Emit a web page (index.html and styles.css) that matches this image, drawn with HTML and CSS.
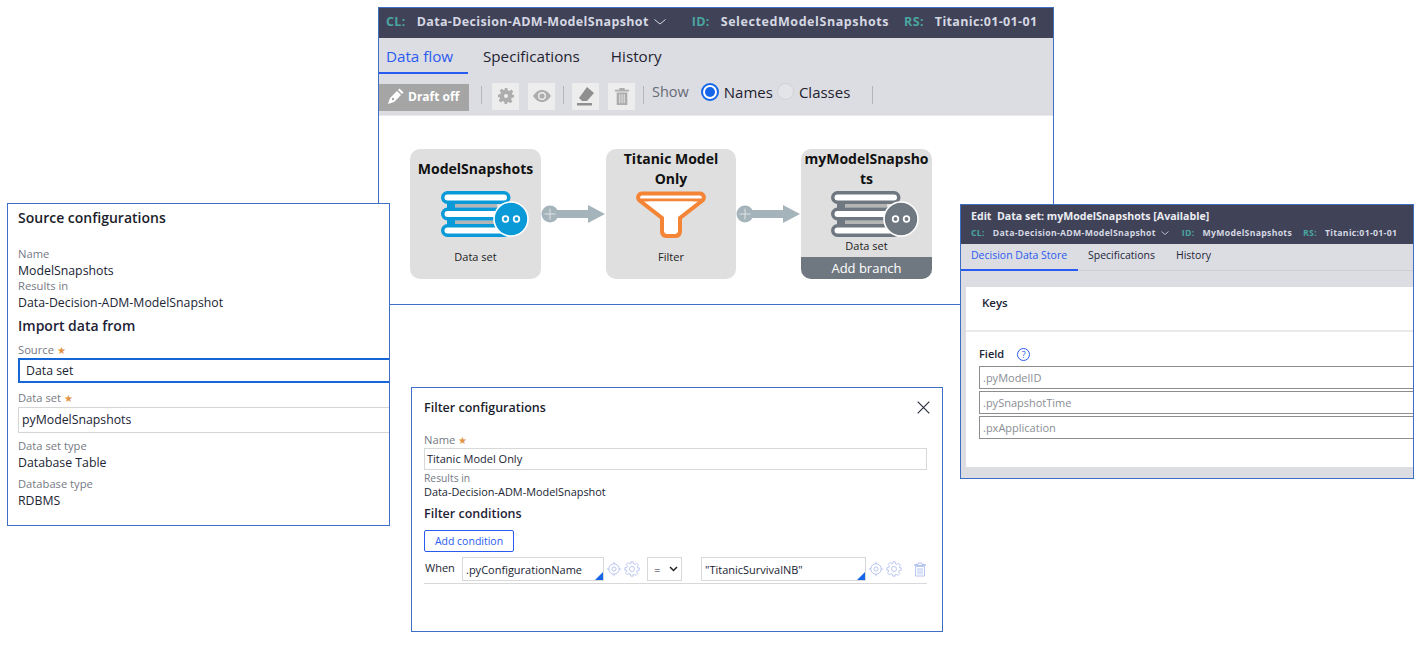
FILE: index.html
```html
<!DOCTYPE html>
<html lang="en">
<head>
<meta charset="utf-8">
<title>Data flow</title>
<link rel="stylesheet" href="styles.css">
</head>
<body>
<svg class="defs" width="0" height="0" aria-hidden="true">
  <defs>
    <symbol id="stack" viewBox="0 0 88 46">
      <rect x="6" y="12" width="8" height="5" fill="currentColor"/>
      <rect x="6" y="29" width="8" height="5" fill="currentColor"/>
      <rect x="14" y="12.500" width="42" height="4" fill="#b5b5b5"/>
      <rect x="14" y="29.500" width="42" height="4" fill="#b5b5b5"/>
      <rect x="1.750" y="1.750" width="66" height="9.500" rx="4.750" fill="#fff" stroke="currentColor" stroke-width="3.500"/>
      <rect x="1.750" y="18.250" width="66" height="9.500" rx="4.750" fill="#fff" stroke="currentColor" stroke-width="3.500"/>
      <rect x="1.750" y="34.750" width="66" height="9.500" rx="4.750" fill="#fff" stroke="currentColor" stroke-width="3.500"/>
      <circle cx="70" cy="28" r="17" fill="currentColor" stroke="#fff" stroke-width="1.600"/>
      <circle cx="64.500" cy="28" r="2.800" fill="none" stroke="#fff" stroke-width="1.800"/>
      <circle cx="75.500" cy="28" r="2.800" fill="none" stroke="#fff" stroke-width="1.800"/>
    </symbol>
    <symbol id="arrow" viewBox="0 0 64 18">
      <rect x="8" y="5" width="40" height="8" fill="#a5b3ba"/>
      <path d="M47 0 L64 9 L47 18Z" fill="#a5b3ba"/>
      <circle cx="9" cy="9" r="8.500" fill="#a5b3ba"/>
      <path d="M9 3.500V14.500M3.500 9H14.500" stroke="#dfe4e6" stroke-width="1"/>
    </symbol>
    <symbol id="gear" viewBox="-1 -1 19 19">
      <path d="M7 0h3l.4 2.400 1.700.7 2-1.400 2.100 2.100-1.400 2 .7 1.700L17 7v3l-2.400.4-.7 1.700 1.400 2-2.100 2.100-2-1.400-1.700.7L9.900 17H7l-.4-2.400-1.700-.7-2 1.400-2.100-2.100 1.400-2-.7-1.700L0 10V7l2.400-.4.700-1.700-1.400-2L3.800 .8l2 1.400 1.700-.7z" fill="none" stroke="currentColor" stroke-width="1"/>
      <circle cx="8.500" cy="8.500" r="3" fill="none" stroke="currentColor" stroke-width="1"/>
    </symbol>
    <symbol id="target" viewBox="0 0 20 20">
      <circle cx="10" cy="10" r="6.500" fill="none" stroke="currentColor" stroke-width="1.100"/>
      <circle cx="10" cy="10" r="2.600" fill="none" stroke="currentColor" stroke-width="1.100"/>
      <path d="M10 1V3.500M10 16.500V19M1 10H3.500M16.500 10H19" stroke="currentColor" stroke-width="1.100"/>
    </symbol>
  </defs>
</svg>

<main class="desk">
  <section class="win win-flow">
    <header class="idbar">
      <span class="idk">CL:</span><span class="idv">Data-Decision-ADM-ModelSnapshot</span>
      <svg class="chev" width="12" height="6" viewBox="0 0 12 6"><path d="M.5 .5L6 5 11.500 .5" fill="none" stroke="#d5d8e2"/></svg>
      <span class="idk id-gap">ID:</span><span class="idv idv-w">SelectedModelSnapshots</span>
      <span class="idk rs-gap">RS:</span><span class="idv">Titanic:01-01-01</span>
    </header>
    <nav class="tabs">
      <span class="tab tab-on">Data flow</span>
      <span class="tab">Specifications</span>
      <span class="tab">History</span>
    </nav>
    <div class="toolbar">
      <span class="draft">
        <svg width="17" height="17" viewBox="0 0 17 17"><path d="M1 16l2-6 7-7 4 4-7 7zM11 2l1.500-1.500 4 4L15 6z" fill="#fff"/><circle cx="6" cy="11" r="1.200" fill="#a5a5a5"/></svg>
        Draft off
      </span>
      <i class="sep s1"></i>
      <span class="tbtn"><svg width="16" height="16" viewBox="0 0 17 17"><path d="M7 0h3l.4 2.400 1.700.7 2-1.400 2.100 2.100-1.400 2 .7 1.700L17 7v3l-2.400.4-.7 1.700 1.400 2-2.100 2.100-2-1.400-1.700.7L9.900 17H7l-.4-2.400-1.700-.7-2 1.400-2.100-2.100 1.400-2-.7-1.700L0 10V7l2.400-.4.700-1.700-1.400-2L3.800 .8l2 1.400 1.700-.7z" fill="#adadad"/><circle cx="8.500" cy="8.500" r="2.200" fill="#ededed"/></svg></span>
      <span class="tbtn"><svg width="18" height="12" viewBox="0 0 18 12"><path d="M0 6C3 1.500 6 0 9 0s6 1.500 9 6c-3 4.500-6 6-9 6S3 10.500 0 6z" fill="#adadad"/><circle cx="9" cy="6" r="4" fill="#ededed"/><circle cx="9" cy="6" r="2.600" fill="#adadad"/></svg></span>
      <i class="sep s2"></i>
      <span class="tbtn"><svg width="20" height="20" viewBox="0 0 20 20"><path d="M11 1l7 6-7 8-5 0-3-3z" fill="#8f8f8f"/><rect x="1" y="17" width="15" height="2.500" fill="#8f8f8f"/></svg></span>
      <span class="tbtn"><svg width="16" height="18" viewBox="0 0 18 20"><path d="M6 1h6v2h5v2H1V3h5zM3 6h12v14H3z" fill="#adadad"/><path d="M6.500 8v10M9 8v10M11.500 8v10" stroke="#ededed"/></svg></span>
      <i class="sep s3"></i>
      <span class="show">Show</span>
      <span class="radio radio-on"></span><span class="rlabel">Names</span>
      <span class="radio"></span><span class="rlabel">Classes</span>
      <i class="sep s4"></i>
    </div>
    <div class="canvas">
      <article class="node n1">
        <h3>ModelSnapshots</h3>
        <svg class="stack blue"><use href="#stack"/></svg>
        <p>Data set</p>
      </article>
      <svg class="arrow a1" viewBox="0 0 64 18"><use href="#arrow"/></svg>
      <article class="node n2">
        <h3>Titanic Model Only</h3>
        <svg class="funnel" width="72" height="47" viewBox="0 0 72 47"><path d="M7 2.500H65a4 4 0 0 1 3 6.500L45 27V41a5 5 0 0 1-5 4H32a5 5 0 0 1-5-4V27L4 9a4 4 0 0 1 3-6.500z" fill="#fff" stroke="#f58536" stroke-width="4"/><path d="M5 9H67" stroke="#f58536" stroke-width="3"/><path d="M13 10.500H59L42 24V40H30V24z" fill="#fff"/></svg>
        <p>Filter</p>
      </article>
      <svg class="arrow a2" viewBox="0 0 64 18"><use href="#arrow"/></svg>
      <article class="node n3">
        <h3>myModelSnapshots</h3>
        <svg class="stack grey"><use href="#stack"/></svg>
        <p class="p-tight">Data set</p>
        <footer class="branch">Add branch</footer>
      </article>
    </div>
  </section>

  <section class="win win-source">
    <h2 class="title">Source configurations</h2>
    <div class="lab lab-first">Name</div>
    <div class="val">ModelSnapshots</div>
    <div class="lab">Results in</div>
    <div class="val">Data-Decision-ADM-ModelSnapshot</div>
    <h3 class="sub">Import data from</h3>
    <div class="lab">Source <span class="star">★</span></div>
    <div class="input input-focus">Data set</div>
    <div class="lab lab-m">Data set <span class="star">★</span></div>
    <div class="input input-ds">pyModelSnapshots</div>
    <div class="lab lab-m2">Data set type</div>
    <div class="val">Database Table</div>
    <div class="lab lab-m3">Database type</div>
    <div class="val">RDBMS</div>
  </section>

  <section class="win win-filter">
    <div class="f-head">
      <h2 class="title">Filter configurations</h2>
      <svg class="f-x" width="13" height="13" viewBox="0 0 13 13"><path d="M.7 .7L12.300 12.300M12.300 .7L.7 12.300" stroke="#2c2f3f" stroke-width="1.200"/></svg>
    </div>
    <div class="lab f-lab">Name <span class="star">★</span></div>
    <div class="finput">Titanic Model Only</div>
    <div class="lab f-res">Results in</div>
    <div class="val val-f">Data-Decision-ADM-ModelSnapshot</div>
    <h3 class="sub sub-f">Filter conditions</h3>
    <button class="addc" type="button">Add condition</button>
    <div class="cond">
      <span class="when">When</span>
      <span class="cinput c1">.pyConfigurationName</span>
      <svg class="ic" width="16" height="16"><use href="#target"/></svg>
      <svg class="ic" width="16" height="16"><use href="#gear"/></svg>
      <span class="sel">=
        <svg width="9" height="6" viewBox="0 0 9 6"><path d="M1 1L4.500 4.500 8 1" fill="none" stroke="#222" stroke-width="1.500"/></svg>
      </span>
      <span class="cinput c2">"TitanicSurvivalNB"</span>
      <svg class="ic" width="16" height="16"><use href="#target"/></svg>
      <svg class="ic" width="16" height="16"><use href="#gear"/></svg>
      <svg class="ic trash" width="12" height="15" viewBox="0 0 12 15"><path d="M4 1h4v1.500h3.500v1H.5v-1H4zM1.500 4.500h9V14h-9zM4 6v6.500M6 6v6.500M8 6v6.500" fill="none" stroke="currentColor" stroke-width=".9"/></svg>
    </div>
  </section>

  <section class="win win-store">
    <header class="s-head">
      <div class="s-title">Edit&nbsp; Data set: myModelSnapshots [Available]</div>
      <div class="s-ids">
        <span class="idk">CL:</span><span class="idv">Data-Decision-ADM-ModelSnapshot</span>
        <svg class="chev" width="8" height="4" viewBox="0 0 8 4"><path d="M.5 .5L4 3.500 7.500 .5" fill="none" stroke="#d5d8e2" stroke-width=".8"/></svg>
        <span class="idk s-id">ID:</span><span class="idv">MyModelSnapshots</span>
        <span class="idk s-rs">RS:</span><span class="idv">Titanic:01-01-01</span>
      </div>
    </header>
    <nav class="s-tabs">
      <span class="s-tab s-tab-on">Decision Data Store</span>
      <span class="s-tab">Specifications</span>
      <span class="s-tab">History</span>
    </nav>
    <div class="s-body">
      <div class="s-card">
        <div class="keys">Keys</div>
        <div class="fields">
          <div class="field-h">Field <span class="help">?</span></div>
          <div class="finp">.pyModelID</div>
          <div class="finp">.pySnapshotTime</div>
          <div class="finp">.pxApplication</div>
        </div>
      </div>
    </div>
  </section>
</main>
</body>
</html>
```

FILE: styles.css
```css
* { box-sizing: border-box; }
html, body { margin: 0; padding: 0; height: 100%; overflow: hidden; background: #fff; }
body { font-family: "Open Sans", "Noto Sans", sans-serif; color: #202433; }
h2, h3, p { margin: 0; }
.defs { position: absolute; }
.desk { position: relative; width: 1423px; height: 646px; }

.win { position: absolute; background: #fff; border: 1px solid #3f6fc4; }
.win-flow { left: 378px; top: 7px; width: 676px; height: 298px; display: flex; flex-direction: column; }
.win-source { left: 7px; top: 203px; width: 383px; height: 323px; padding: 4px 0 0 10px; overflow: hidden; }
.win-filter { left: 411px; top: 387px; width: 532px; height: 245px; padding: 10px 15px 0 12px; }
.win-store { left: 960px; top: 204px; width: 454px; height: 275px; display: flex; flex-direction: column; overflow: hidden; }

.idbar { height: 30px; flex: none; background: #404258; display: flex; align-items: center; padding: 0 0 3px 7px; font-size: 12.500px; font-weight: 700; letter-spacing: .35px; }
.idk { color: #4aa6a0; }
.idv { color: #d5d8e2; margin-left: 11px; white-space: nowrap; }
.idv-w { letter-spacing: .58px; }
.chev { margin-left: 5px; }
.id-gap { margin-left: 26px; }
.rs-gap { margin-left: 15px; }

.tabs { height: 36px; flex: none; background: #dcdde2; display: flex; align-items: stretch; font-size: 15.200px; }
.tab { padding: 8px 15px 0 15px; color: #1f2230; line-height: 21px; white-space: nowrap; }
.tab:first-child { padding-left: 7px; padding-right: 0; color: #2a5bf0; border-bottom: 2px solid #2a5bf0; width: 89px; }
.tab:nth-child(3) { padding-left: 16px; }

.toolbar { height: 42px; flex: none; background: #dcdde2; border-bottom: 1px solid #e9e9ec; display: flex; align-items: center; }
.draft { width: 90px; height: 27px; margin-top: 6px; background: #a5a5a5; color: #fff; font-size: 12px; font-weight: 700; display: flex; align-items: center; gap: 4px; padding: 0 0 2px 8px; white-space: nowrap; }
.sep { width: 1px; height: 18px; background: #b5b6bb; flex: none; }
.s1 { margin: 0 10px 0 12px; }
.s2 { margin: 0 8px 0 8px; }
.s3 { margin: 0 8px 0 8px; }
.s4 { margin: 0 0 0 22px; }
.tbtn { width: 27px; height: 27px; background: #ededed; display: flex; align-items: center; justify-content: center; margin-top: 3px; }
.tbtn + .tbtn { margin-left: 9px; }
.show { font-size: 14.500px; color: #666a75; margin: 0 12px 6px 0; }
.radio { width: 17px; height: 17px; border-radius: 50%; background: #e3e4e8; border: 1px solid #d0d1d6; flex: none; margin-bottom: 6px; }
.radio-on { width: 18px; height: 18px; background: #fff; border: 2px solid #1565e8; position: relative; }
.radio-on::after { content: ""; position: absolute; inset: 2px; border-radius: 50%; background: #1565e8; }
.rlabel { font-size: 15px; margin: 0 0 6px 5px; color: #1f2230; }
.rlabel + .radio { margin-left: 4px; }

.canvas { position: relative; flex: 1; background: #fff; }
.node { position: absolute; top: 33px; width: 131px; height: 130px; background: #dfdfdf; border-radius: 10px; text-align: center; overflow: hidden; display: flex; flex-direction: column; align-items: center; }
.n1 { left: 31px; }
.n2 { left: 227px; width: 130px; }
.n3 { left: 422px; }
.node h3 { font-size: 14px; font-weight: 700; line-height: 20px; color: #111; width: 131px; word-break: break-all; padding: 0 2px; height: 42px; flex: none; }
.n1 h3 { padding-top: 10px; word-break: normal; }
.n2 h3 { word-break: normal; padding: 0 10px; width: 130px; }
.stack { width: 88px; height: 46px; flex: none; margin-left: 18px; }
.blue { color: #0a9ad8; }
.grey { color: #6f7881; margin-left: 16px; }
.funnel { flex: none; }
.node p { font-size: 11px; color: #222; margin-top: 12px; line-height: 16px; }
.n2 p { margin-top: 11px; }
.node .p-tight { margin-top: 1px; }
.branch { margin-top: auto; width: 100%; height: 22px; background: #6f7881; color: #fff; font-size: 13px; line-height: 22px; }
.arrow { position: absolute; top: 89px; width: 64px; height: 18px; }
.a1 { left: 162px; }
.a2 { left: 357px; }

.title { font-size: 14px; font-weight: 600; line-height: 19px; color: #1b1e2c; }
.lab { font-size: 11.200px; color: #767a84; line-height: 16px; }
.lab-first { margin-top: 19px; }
.val { font-size: 12.300px; color: #202433; line-height: 15px; padding-top: 1px; }
.star { color: #e39243; font-size: 10px; }
.sub { font-size: 14px; font-weight: 600; line-height: 20px; margin-top: 6px; color: #1e2236; }
.sub + .lab { margin-top: 6px; }
.input { height: 26px; font-size: 12.300px; line-height: 24px; }
.input-focus { height: 25px; line-height: 21px; border: 2px solid #1766d6; border-right: 0; padding-left: 6px; }
.input-ds { border: 1px solid #d5d5d5; border-right: 0; padding-left: 3px; margin-top: 1px; }
.lab-m { margin-top: 7px; }
.lab-m2 { margin-top: 5px; }
.lab-m3 { margin-top: 6px; }

.f-head { display: flex; justify-content: space-between; align-items: center; }
.f-head .title { font-size: 12.500px; }
.f-x { margin-right: -3px; }
.f-lab { margin-top: 15px; }
.finput { height: 22px; border: 1px solid #d8d8d8; font-size: 11px; line-height: 20px; padding-left: 2px; }
.f-res { margin-top: 1px; font-size: 10.300px; line-height: 14px; }
.val-f { font-size: 10.900px; line-height: 14px; padding-top: 0; }
.sub-f { font-size: 12.500px; margin-top: 6px; line-height: 17px; }
.addc { display: block; margin-top: 8px; width: 90px; height: 22px; padding: 0; background: #fff; border: 1px solid #2a5bf0; border-radius: 2px; color: #2a5bf0; font: 400 10.500px "Open Sans", sans-serif; }
.cond { display: flex; align-items: center; margin-top: 5px; height: 27px; border-bottom: 1px solid #d8d8d8; padding-bottom: 2px; font-size: 11px; }
.when { width: 38px; padding-left: 1px; margin-top: -3px; }
.cinput { height: 24px; border: 1px solid #d8d8d8; line-height: 24px; padding-left: 3px; position: relative; }
.cinput::after { content: ""; position: absolute; right: 0; bottom: 0; border: 4px solid transparent; border-right-color: #1766e8; border-bottom-color: #1766e8; }
.c1 { width: 142px; margin-right: 2px; }
.c2 { width: 165px; margin-right: 2px; }
.ic { color: #b0bfee; flex: none; }
.ic + .ic { margin-left: 2px; }
.ic + .ic + .trash { margin-left: 12px; }
.sel { width: 35px; height: 24px; margin-left: 7px; margin-right: 19px; border: 1px solid #d8d8d8; display: flex; align-items: center; justify-content: space-between; padding: 0 3px 0 6px; }

.s-head { height: 39px; flex: none; background: #404258; padding: 4px 0 0 10px; }
.s-title { color: #eceef3; font-size: 10.600px; font-weight: 700; line-height: 15px; white-space: nowrap; }
.s-ids { display: flex; align-items: center; font-size: 8.700px; font-weight: 700; letter-spacing: .3px; line-height: 14px; margin-top: 2px; }
.s-ids .idv { margin-left: 8px; }
.s-id { margin-left: 13px; }
.s-rs { margin-left: 11px; }
.s-tabs { height: 27px; flex: none; background: #dcdde2; display: flex; font-size: 10.500px; border-bottom: 1px solid #cfd0d6; }
.s-tab { padding: 2px 11px 0 10px; line-height: 19px; color: #23263a; white-space: nowrap; }
.s-tab-on { width: 117px; padding-right: 0; color: #2a5bf0; border-bottom: 2px solid #2a5bf0; height: 27px; }
.s-body { flex: 1; background: #dcdde2; padding: 16px 0 11px 5px; }
.s-card { background: #fff; height: 100%; margin-right: -2px; }
.keys { height: 45px; border-bottom: 2px solid #eaeaea; font-size: 11.500px; font-weight: 600; line-height: 17px; padding: 7px 0 0 16px; }
.fields { padding: 14px 0 0 13px; }
.field-h { font-size: 11px; font-weight: 600; line-height: 16px; margin-bottom: 4px; display: flex; align-items: center; gap: 13px; }
.help { width: 13px; height: 13px; border-radius: 50%; border: 1px solid #2a5bf0; color: #2a5bf0; font-size: 9px; font-weight: 400; line-height: 11px; text-align: center; }
.finp { height: 23px; border: 1px solid #8d8d8d; border-right: 0; margin-bottom: 2px; font-size: 11px; color: #8a8d94; line-height: 21px; padding-left: 3px; }
```
